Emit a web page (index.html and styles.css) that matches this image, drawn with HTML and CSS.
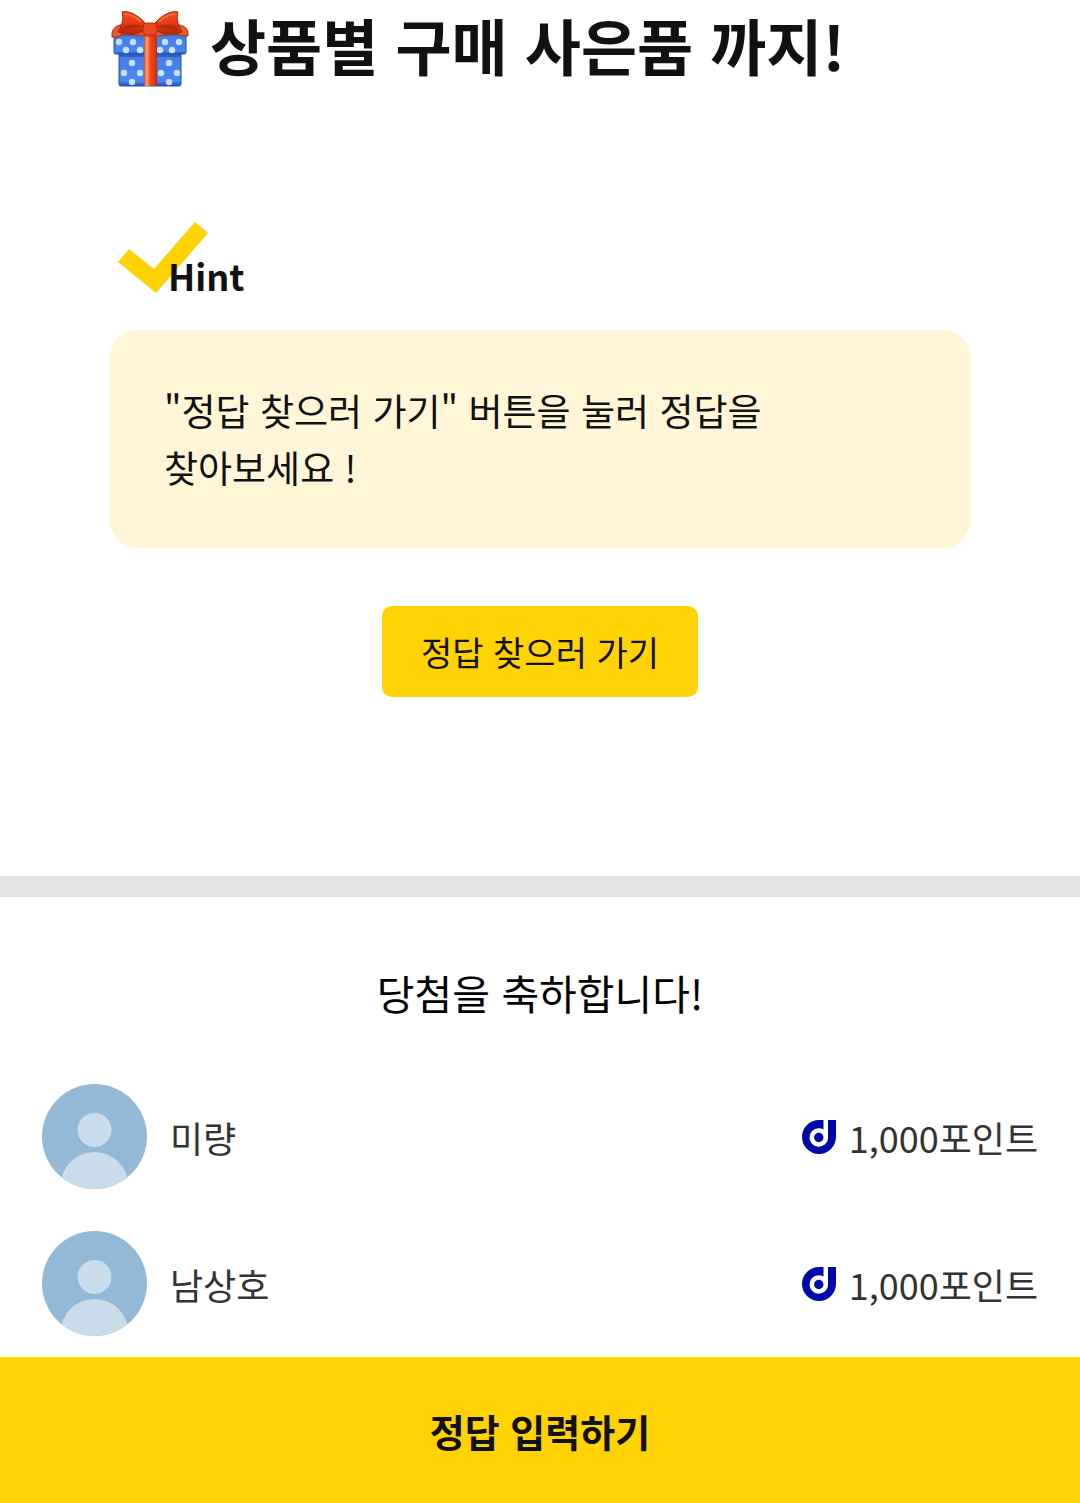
FILE: index.html
```html
<!DOCTYPE html>
<html lang="ko">
<head>
<meta charset="utf-8">
<meta name="viewport" content="width=device-width, initial-scale=1">
<title>정답 찾기</title>
<link rel="stylesheet" href="styles.css">
</head>
<body>
<svg class="symbols" aria-hidden="true">
  <symbol id="avatar" viewBox="0 0 105 105">
    <clipPath id="avatar-clip"><circle cx="52.5" cy="52.5" r="52.5"/></clipPath>
    <g clip-path="url(#avatar-clip)">
      <rect width="105" height="105" fill="#93b9d6"/>
      <circle cx="52.5" cy="46" r="17" fill="#c9dcea"/>
      <circle cx="52.5" cy="102" r="34" fill="#c9dcea"/>
    </g>
  </symbol>
  <symbol id="point" viewBox="0 0 34 34">
    <path d="M17 0H34V17A17 17 0 1 1 17 0Z" fill="#0008a8"/>
    <path d="M21.500 0H26V17.500A9.200 9.200 0 1 1 21.500 9.600Z" fill="#fff"/>
    <circle cx="16.800" cy="17.500" r="4.700" fill="#0008a8"/>
  </symbol>
</svg>
<main>
  <section class="event">
    <h1 class="title">
      <svg class="gift" viewBox="0 0 78 76" role="img" aria-label="선물">
        <defs>
          <linearGradient id="box" x2="0" y2="1"><stop offset="0" stop-color="#477be8"/><stop offset=".85" stop-color="#4a87f5"/><stop offset="1" stop-color="#2450ae"/></linearGradient>
          <linearGradient id="ribbon"><stop offset="0" stop-color="#c94a28"/><stop offset=".2" stop-color="#ffa070"/><stop offset=".5" stop-color="#ee4517"/><stop offset=".85" stop-color="#e93408"/><stop offset="1" stop-color="#9f2d2c"/></linearGradient>
          <linearGradient id="bow" x2="0" y2="1"><stop offset="0" stop-color="#f5512c"/><stop offset=".5" stop-color="#e63a12"/><stop offset="1" stop-color="#b92608"/></linearGradient>
        </defs>
        <path d="M8 40H70V73Q70 75 68 75H10Q8 75 8 73Z" fill="url(#box)" stroke="#2c5299"/>
        <path d="M8 42H70V46H8Z" fill="#2f5fc0"/>
        <g fill="#c5e2ff">
          <circle cx="21" cy="52" r="3.200"/><circle cx="13" cy="62" r="3.200"/><circle cx="29" cy="62" r="3.200"/><circle cx="21" cy="71" r="3.200"/>
          <circle cx="58" cy="52" r="3.200"/><circle cx="50" cy="62" r="3.200"/><circle cx="66" cy="62" r="3.200"/><circle cx="58" cy="71" r="3.200"/>
        </g>
        <path d="M3 24H75V41Q75 43 73 43H5Q3 43 3 41Z" fill="url(#box)" stroke="#2c5299"/>
        <g fill="#c5e2ff">
          <circle cx="8" cy="31" r="3.200"/><circle cx="22" cy="31" r="3.200"/><circle cx="15" cy="39" r="3.200"/><circle cx="29" cy="39" r="3.200"/>
          <circle cx="54" cy="31" r="3.200"/><circle cx="68" cy="31" r="3.200"/><circle cx="49" cy="39" r="3.200"/><circle cx="61" cy="39" r="3.200"/>
        </g>
        <path d="M33 24H46V75H33Z" fill="url(#ribbon)"/>
        <path d="M9 14Q0 16 1 26L7 26Q13 21 32 25H48Q64 21 71 25L77 25Q78 16 69 14Z" fill="#e65a2d" stroke="#a83217"/>
        <path d="M34 12C28 5 18-1 11 1C13 8 11 14 7 21C18 25 27 23 34 19Z" fill="url(#bow)" stroke="#a8260c"/>
        <path d="M44 12C50 5 60-1 67 1C65 8 67 14 71 21C60 25 51 23 44 19Z" fill="url(#bow)" stroke="#a8260c"/>
        <path d="M14 15Q24 12 33 16Q23 16 10 20ZM64 15Q54 12 45 16Q55 16 68 20Z" fill="#b32c0e"/>
        <path d="M14 3Q24 4 30 11M64 3Q54 4 48 11" fill="none" stroke="#ff7048" stroke-width="1.500"/>
        <rect x="32" y="12" width="14" height="12" rx="4" fill="#e94720" stroke="#b52e10"/>
      </svg>
      <span class="title-text">상품별 구매 사은품 까지!</span>
    </h1>
    <div class="hint">
      <h2 class="hint-title">
        <svg class="check" viewBox="0 0 90 72" aria-hidden="true"><path d="M0 40L11 27L36 47L77 0L90 11L38 71Z" fill="#ffd303"/></svg>
        <span class="hint-label">Hint</span>
      </h2>
      <p class="hint-box">"정답 찾으러 가기" 버튼을 눌러 정답을 찾아보세요 !</p>
    </div>
    <button class="find" type="button">정답 찾으러 가기</button>
  </section>
  <section class="winners">
    <h2 class="winners-title">당첨을 축하합니다!</h2>
    <ul class="list">
      <li class="row">
        <svg class="avatar" aria-hidden="true"><use href="#avatar"/></svg>
        <span class="name">미량</span>
        <svg class="point" aria-hidden="true"><use href="#point"/></svg>
        <span>1,000포인트</span>
      </li>
      <li class="row">
        <svg class="avatar" aria-hidden="true"><use href="#avatar"/></svg>
        <span class="name">남상호</span>
        <svg class="point" aria-hidden="true"><use href="#point"/></svg>
        <span>1,000포인트</span>
      </li>
    </ul>
  </section>
</main>
<button class="submit" type="button">정답 입력하기</button>
</body>
</html>
```
FILE: styles.css
```css
* {
  box-sizing: border-box;
}

body {
  margin: 0;
  background: #fff;
  color: #111;
  font-family: "Noto Sans CJK KR", sans-serif;
}

h1, h2, p, ul {
  margin: 0;
  padding: 0;
}

button {
  border: 0;
  background: #ffd303;
  color: #111;
  font-family: inherit;
  cursor: pointer;
}

.symbols {
  position: absolute;
  width: 0;
  height: 0;
}

.event {
  display: flex;
  flex-direction: column;
  padding: 0 110px 179px;
  border-bottom: 21px solid #e4e4e4;
}

.title {
  display: flex;
  align-items: center;
  gap: 20px;
  min-height: 98px;
  font-size: 61px;
  line-height: 90px;
}

.title-text {
  padding-bottom: 8px;
}

.gift {
  flex: none;
  width: 80px;
  height: 76px;
}

.hint {
  margin-top: 124px;
}

.hint-title {
  display: flex;
  align-items: flex-end;
  height: 72px;
  padding-left: 8px;
  font-size: 36px;
  line-height: 38px;
}

.check {
  width: 90px;
  height: 72px;
}

.hint-label {
  z-index: 1;
  margin-left: -40px;
}

.hint-box {
  margin-top: 36px;
  padding: 52px 54px;
  border-radius: 27px;
  background: #fef6d6;
  font-size: 37px;
  line-height: 57px;
  word-break: keep-all;
}

.find {
  align-self: center;
  width: 316px;
  height: 91px;
  margin-top: 58px;
  border-radius: 10px;
  font-size: 34px;
}

.winners {
  padding: 62px 42px 21px;
}

.winners-title {
  color: #000;
  font-size: 41px;
  font-weight: 400;
  line-height: 66px;
  text-align: center;
}

.list {
  display: flex;
  flex-direction: column;
  gap: 42px;
  margin-top: 59px;
  list-style: none;
}

.row {
  display: flex;
  align-items: center;
  color: #333;
  font-size: 36px;
  line-height: 54px;
}

.avatar {
  width: 105px;
  height: 105px;
  margin-right: 23px;
}

.name {
  flex: 1;
}

.point {
  width: 34px;
  height: 34px;
  margin-right: 13px;
}

.submit {
  position: sticky;
  bottom: 0;
  display: block;
  width: 100%;
  height: 146px;
  font-size: 38px;
  font-weight: 700;
}
```
